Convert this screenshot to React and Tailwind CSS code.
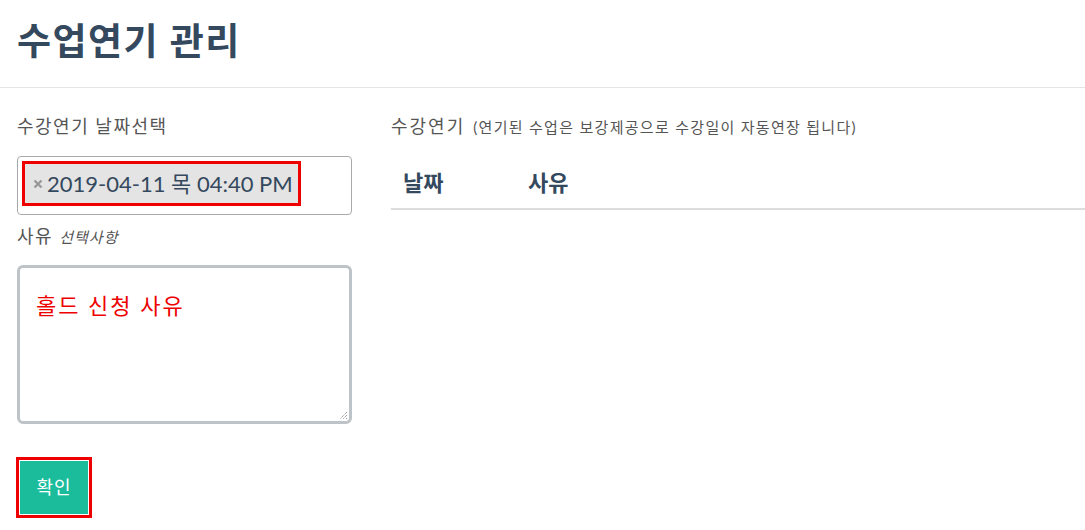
export default function App() {
  const font = { fontFamily: '"Lato", "Noto Sans CJK KR", sans-serif' };
  return (
    <div className="w-[1085px] h-[530px] overflow-hidden bg-white text-[#34495e]" style={font}>
      <div className="h-[88px] border-b border-[#e5e5e5] px-[17px] flex items-center">
        <h1 className="text-[37px] font-bold leading-none tracking-[1.5px] text-[#34495e] -mt-[6px]">수업연기 관리</h1>
      </div>
      <div className="flex pl-[17px] pt-[26px] gap-[39px]">
        <div className="w-[335px] flex flex-col">
          <label className="text-[18px] leading-[24px] tracking-[1.5px] text-[#555]">수강연기 날짜선택</label>
          <div className="mt-[18px] h-[59px] border border-[#aaa] rounded-[4px] px-[4px] pt-[4px]">
            <div className="w-[279px] h-[45px] border-[3px] border-[#e00] bg-[#e4e4e4] flex items-center pl-[8px]">
              <svg width="10" height="10" viewBox="0 0 10 10" className="mr-[4px] mt-[1px]">
                <path d="M1.5 1.5 L8.5 8.5 M8.5 1.5 L1.5 8.5" stroke="#999" strokeWidth="2.4" strokeLinecap="butt" />
              </svg>
              <span className="text-[22px] leading-none text-[#34495e]">2019-04-11 목 04:40 PM</span>
            </div>
          </div>
          <div className="mt-[9px] text-[18px] leading-[24px] tracking-[1.5px] text-[#555]">
            사유 <i className="text-[15px] tracking-[1px]">선택사항</i>
          </div>
          <div className="mt-[16px] h-[159px] border-[3px] border-[#bdc3c7] rounded-[6px] relative">
            <div className="pt-[22px] pl-[16px] text-[22px] tracking-[2px] text-[#e00] leading-[32px]">홀드 신청 사유</div>
            <svg className="absolute right-[1px] bottom-[1px]" width="10" height="10" viewBox="0 0 10 10">
              <path d="M9 2 L2 9 M9 5 L5 9 M9 8 L8 9" stroke="#777" strokeWidth="1" strokeDasharray="1 1" />
            </svg>
          </div>
          <div className="mt-[33px] w-[76px] h-[61px] border-[3px] border-[#e00] ml-[-1px] p-[1px]">
            <button className="w-full h-full bg-[#1abc9c] text-white text-[18px] tracking-[1px] flex items-center justify-center">확인</button>
          </div>
        </div>
        <div className="flex-1 flex flex-col">
          <div className="flex items-baseline">
            <span className="text-[18px] leading-[24px] tracking-[2px] text-[#555]">수강연기</span>
            <span className="text-[15px] tracking-[1.3px] text-[#555] ml-[8px]">(연기된 수업은 보강제공으로 수강일이 자동연장 됩니다)</span>
          </div>
          <div className="mt-[19px] flex border-b-2 border-[#ddd] h-[52px] items-center">
            <div className="w-[137px] pl-[12px] text-[22px] font-bold">날짜</div>
            <div className="text-[22px] font-bold">사유</div>
          </div>
        </div>
      </div>
    </div>
  );
}
